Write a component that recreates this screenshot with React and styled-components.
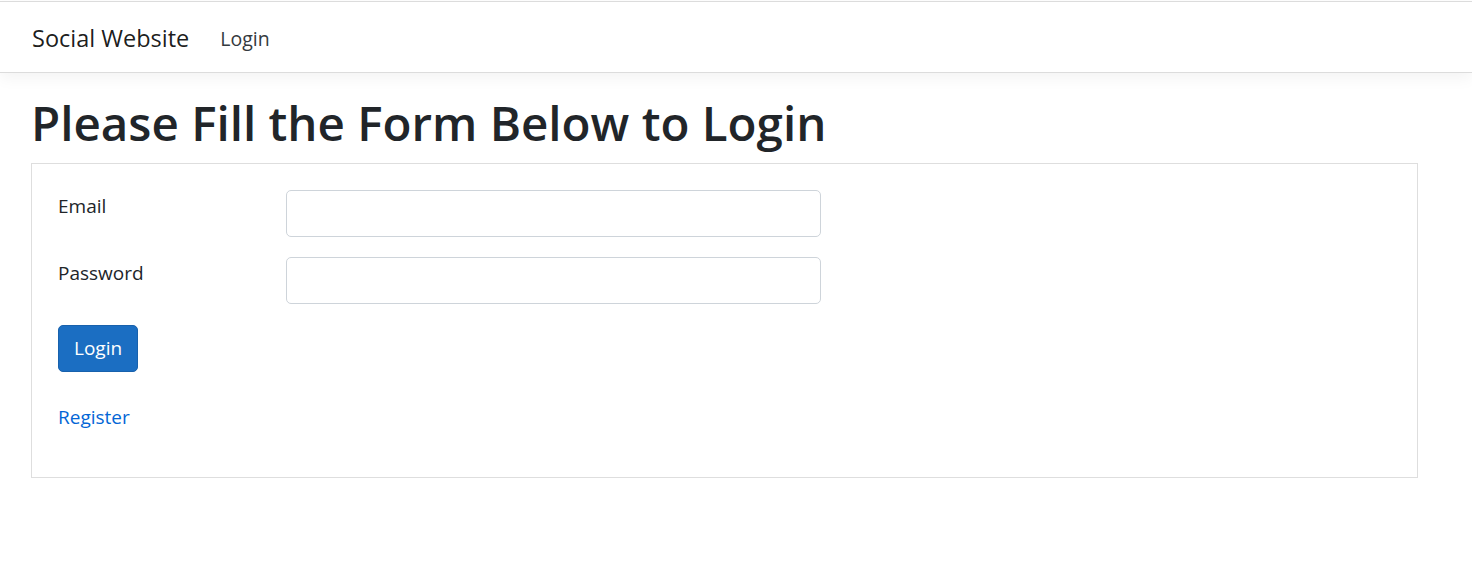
import React from "react";
import styled, { createGlobalStyle } from "styled-components";

const GlobalStyle = createGlobalStyle`
  html, body { margin: 0; padding: 0; background: #fff; }
  body {
    font-family: "Open Sans", "Noto Sans", "Liberation Sans", sans-serif;
    font-size: 19px;
    line-height: 1.5;
    color: #212529;
  }
  * { box-sizing: border-box; }
`;

const Header = styled.header`
  margin-top: 1px;
  border-top: 1px solid #dcdcdc;
  border-bottom: 1px solid #dcdcdc;
  box-shadow: 0 5px 15px rgba(0, 0, 0, 0.05);
  background: #fff;
`;

const Nav = styled.nav`
  height: 70px;
  display: flex;
  align-items: center;
  gap: 31px;
  padding: 3px 32px 0 32px;
`;

const Brand = styled.a`
  font-size: 23.5px;
  color: rgba(0, 0, 0, 0.9);
  text-decoration: none;
`;

const NavLink = styled.a`
  font-size: 19.5px;
  color: #343a40;
  text-decoration: none;
`;

const Main = styled.main`
  padding: 20px 54px 0 31px;
`;

const Title = styled.h1`
  margin: 0 0 10px 0;
  font-size: 47.5px;
  font-weight: 600;
  line-height: 60px;
  color: #212529;
`;

const Card = styled.section`
  border: 1px solid #dedede;
  padding: 26px 26px 45px 26px;
`;

const Row = styled.div`
  display: grid;
  grid-template-columns: 228px 535px;
  align-items: start;
  margin-bottom: 20px;
`;

const Label = styled.label`
  padding-top: 2px;
  color: #212529;
`;

const Input = styled.input`
  height: 47px;
  width: 100%;
  border: 1px solid #ced4da;
  border-radius: 5px;
  padding: 0 15px;
  font: inherit;
`;

const Button = styled.button`
  height: 47px;
  padding: 0 15px;
  margin-top: 1px;
  background: #1b6ec2;
  border: 1px solid #1861ac;
  border-radius: 5px;
  color: #fff;
  font: inherit;
  cursor: pointer;
`;

const LinkLine = styled.p`
  margin: 31px 0 0 0;
`;

const TextLink = styled.a`
  color: #0366d6;
  text-decoration: none;
`;

export default function App() {
  return (
    <>
      <GlobalStyle />
      <Header>
        <Nav>
          <Brand href="#">Social Website</Brand>
          <NavLink href="#">Login</NavLink>
        </Nav>
      </Header>
      <Main>
        <Title>Please Fill the Form Below to Login</Title>
        <Card>
          <Row>
            <Label>Email</Label>
            <Input type="email" />
          </Row>
          <Row>
            <Label>Password</Label>
            <Input type="password" />
          </Row>
          <Button>Login</Button>
          <LinkLine>
            <TextLink href="#">Register</TextLink>
          </LinkLine>
        </Card>
      </Main>
    </>
  );
}
